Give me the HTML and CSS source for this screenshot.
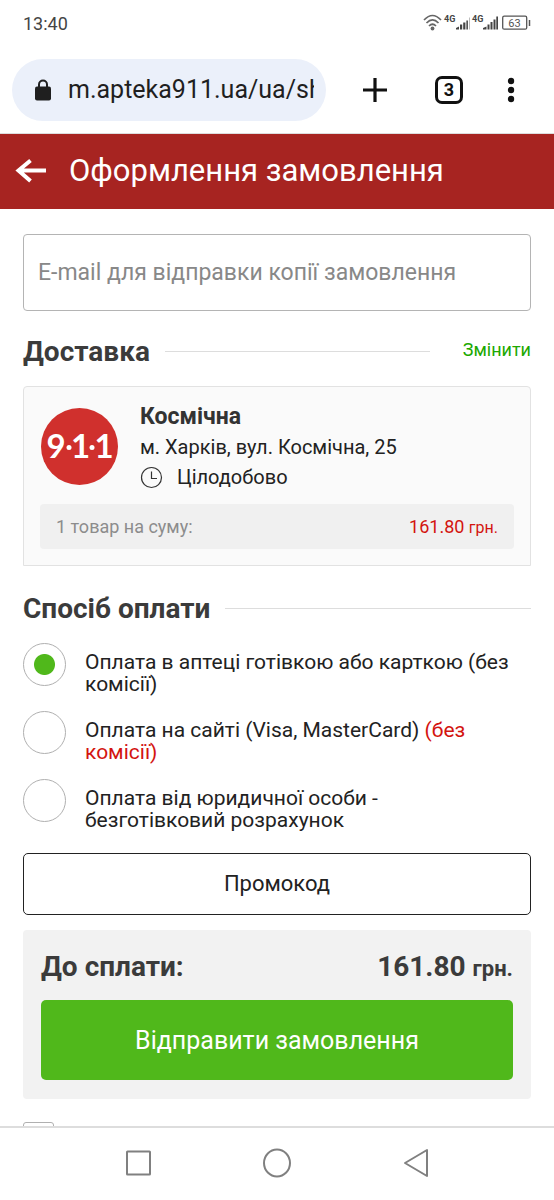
FILE: index.html
```html
<!DOCTYPE html>
<html lang="uk">
<head>
<meta charset="utf-8">
<meta name="viewport" content="width=device-width, initial-scale=1">
<title>Оформлення замовлення</title>
<link rel="stylesheet" href="styles.css">
</head>
<body>
<div class="screen">
  <div class="status">
    <time class="clock">13:40</time>
    <svg class="status-icons" width="108" height="20" viewBox="0 0 108 20" role="img" aria-label="Wi-Fi, 4G, 63%">
      <g fill="none" stroke="#666" stroke-width="1.700">
        <path d="M1 7Q9.500-2 18 7"/>
        <path d="M3.500 10Q9.500 4 15.500 10"/>
        <path d="M6 13Q9.500 9.500 13 13"/>
      </g>
      <circle cx="9.500" cy="15.500" r="1.900" fill="#666"/>
      <g class="net" fill="#444"><text x="21" y="9">4G</text><text x="49" y="9">4G</text></g>
      <g fill="#444">
        <path d="M33 16.500v-1.500l3-1.500v3zM37 16.500v-5h2.200v5zM40.200 16.500v-7h2.200v7z"/>
        <path d="M43.400 16.500v-9h1.500v9z"/><path d="M46 16.500v-12h1v12z" fill="#bbb"/>
        <path d="M60 16.500v-1.500l3.500-1.500v3zM64.500 16.500v-5h2v5zM67.500 16.500v-7.500h2v7.500zM70.500 16.500v-10h2v10zM73.300 16.500v-13h1.700v13z"/>
      </g>
      <rect x="79.700" y="3.200" width="24" height="13" rx="1.500" fill="none" stroke="#555" stroke-width="1.300"/>
      <path d="M106.500 7v6" stroke="#555" stroke-width="1.500"/>
      <text class="charge" x="91.500" y="13.500" text-anchor="middle" fill="#555">63</text>
    </svg>
  </div>

  <div class="browser">
    <label class="address">
      <svg width="18" height="22" viewBox="0 0 18 22" aria-hidden="true"><rect x="1" y="7.500" width="16" height="14" rx="2" fill="#1f1f1f"/><path d="M5 9V5.500a4 4 0 0 1 8 0V9" fill="none" stroke="#1f1f1f" stroke-width="2"/></svg>
      <input class="url" type="text" value="m.apteka911.ua/ua/shop" aria-label="Адреса сторінки">
    </label>
    <button class="tool" type="button" aria-label="Нова вкладка"><svg width="26" height="26" viewBox="0 0 26 26"><path d="M13 1v24M1 13h24" stroke="#111" stroke-width="3.200"/></svg></button>
    <button class="tool tabs" type="button" aria-label="Вкладки: 3"><span class="tab-count">3</span></button>
    <button class="tool more" type="button" aria-label="Меню"><svg width="8" height="26" viewBox="0 0 8 26"><g fill="#111"><circle cx="4" cy="4" r="3.200"/><circle cx="4" cy="13" r="3.200"/><circle cx="4" cy="22" r="3.200"/></g></svg></button>
  </div>

  <header class="header">
    <button class="back" type="button" aria-label="Назад"><svg width="32" height="26" viewBox="0 0 32 26"><path d="M15.500 2.500L3.500 12.500l12 10.500M3.500 12.500h27.500" fill="none" stroke="#fff" stroke-width="4"/></svg></button>
    <h1 class="title">Оформлення замовлення</h1>
  </header>

  <main class="content">
    <input class="email" type="email" placeholder="E-mail для відправки копії замовлення" aria-label="E-mail для відправки копії замовлення">

    <div class="section-head delivery-head">
      <h2 class="section-title">Доставка</h2>
      <span class="rule"></span>
      <a class="change" href="#">Змінити</a>
    </div>

    <section class="card">
      <div class="store">
        <svg class="logo" width="77" height="77" viewBox="0 0 77 77" role="img" aria-label="9·1·1">
          <circle cx="38.500" cy="38.500" r="38.500" fill="#d0302d"/>
          <g class="logo-digits" fill="#fff" text-anchor="middle"><text x="15" y="50">9</text><text x="39.500" y="50">1</text><text x="63" y="50">1</text></g>
          <g fill="#fff"><circle cx="28" cy="39.500" r="2.500"/><circle cx="51" cy="39.500" r="2.500"/></g>
        </svg>
        <div class="store-info">
          <h3 class="store-name">Космічна</h3>
          <p class="store-line">м. Харків, вул. Космічна, 25</p>
          <p class="store-line hours">
            <svg width="23" height="23" viewBox="0 0 23 23" aria-hidden="true"><circle cx="11.500" cy="11.500" r="10" fill="none" stroke="#333" stroke-width="1.200"/><path d="M11.500 5.500v7H17" fill="none" stroke="#333" stroke-width="1.200"/></svg>
            Цілодобово
          </p>
        </div>
      </div>
      <div class="summary"><span>1 товар на суму:</span><span class="price">161.80 <small>грн.</small></span></div>
    </section>

    <div class="section-head payment-head">
      <h2 class="section-title">Спосіб оплати</h2>
      <span class="rule"></span>
    </div>

    <div class="options" role="radiogroup" aria-label="Спосіб оплати">
      <label class="option"><input class="radio" type="radio" name="pay" checked><span class="option-text">Оплата в аптеці готівкою або карткою (без комісії)</span></label>
      <label class="option"><input class="radio" type="radio" name="pay"><span class="option-text">Оплата на сайті (Visa, MasterCard) <span class="accent">(без комісії)</span></span></label>
      <label class="option"><input class="radio" type="radio" name="pay"><span class="option-text">Оплата від юридичної особи - безготівковий розрахунок</span></label>
    </div>

    <button class="promo" type="button">Промокод</button>

    <section class="checkout">
      <div class="total"><span>До сплати:</span><span class="sum">161.80 <small>грн.</small></span></div>
      <button class="submit" type="button">Відправити замовлення</button>
    </section>

    <input class="check" type="checkbox" aria-label="Погодження з умовами">
  </main>

  <nav class="system-nav">
    <button class="nav-btn" type="button" aria-label="Останні програми"><svg width="32" height="32" viewBox="0 0 32 32"><rect x="5" y="4.500" width="23" height="23" rx=".5"/></svg></button>
    <button class="nav-btn" type="button" aria-label="Головний екран"><svg width="32" height="32" viewBox="0 0 32 32"><ellipse cx="16" cy="16" rx="13" ry="13.500"/></svg></button>
    <button class="nav-btn" type="button" aria-label="Назад"><svg width="32" height="32" viewBox="0 0 32 32"><path d="M27 3v26L5 16z" stroke-linejoin="round"/></svg></button>
  </nav>
</div>
</body>
</html>
```
FILE: styles.css
```css
* { box-sizing: border-box; }
body, h1, h2, h3, p { margin: 0; }
body { background: #fff; color: #222; font-family: Roboto, "Liberation Sans", sans-serif; }
button, input { font-family: inherit; }
button { margin: 0; padding: 0; border: 0; background: none; cursor: pointer; }
svg { display: block; flex: none; }

.screen { display: flex; flex-direction: column; height: 100vh; }

.status { display: flex; align-items: center; justify-content: space-between; height: 46px; padding: 0 23px; flex: none; }
.clock { font-size: 18px; color: #444; }
.net { font-size: 9px; font-weight: 700; }
.charge { font-size: 11px; }

.browser { display: flex; align-items: center; flex: none; height: 88px; padding: 0 18px 0 12px; border-bottom: 1px solid #ddd; }
.address { display: flex; align-items: center; gap: 16px; flex: 1; min-width: 0; height: 62px; padding: 0 12px 0 22px; border-radius: 31px; background: #ebf0fa; }
.url { flex: 1; min-width: 0; padding: 0; border: 0; outline: 0; background: none; font-size: 25px; color: #1f1f1f; }
.tool { display: flex; justify-content: center; align-items: center; width: 74px; height: 62px; }
.tool:first-of-type { margin-left: 12px; }
.more { width: 50px; }
.tab-count { display: flex; align-items: center; justify-content: center; width: 28px; height: 28px; border: 3px solid #111; border-radius: 7px; font-size: 18px; font-weight: 700; color: #111; }

.header { display: flex; align-items: center; gap: 22px; flex: none; height: 75px; padding: 0 15px 2px; background: #a72421; color: #fff; }
.title { font-size: 31px; line-height: 36px; font-weight: 400; white-space: nowrap; }

.content { flex: 1; min-height: 0; overflow: hidden; padding: 25px 23px 0; }
.email { display: block; width: 100%; height: 77px; padding: 0 14px; border: 1px solid #b4b4b4; border-radius: 4px; background: #fff; font-size: 23px; color: #222; }
.email::placeholder { color: #888; opacity: 1; }

.section-head { display: flex; align-items: center; gap: 15px; height: 36px; }
.section-title { font-size: 28px; font-weight: 700; color: #3b3b3b; }
.rule { flex: 1; height: 1px; background: #ddd; }
.change { margin-left: 18px; padding-bottom: 4px; font-size: 18px; color: #20a800; text-decoration: none; }
.delivery-head { margin: 22px 0 17px; }
.payment-head { margin: 24px 0 17px; }

.card { padding: 15px 16px 16px; border: 1px solid #e2e2e2; border-radius: 4px 4px 0 0; background: #fafafa; }
.store { display: flex; gap: 22px; margin-bottom: 12px; }
.logo { margin: 6px 0 0 1px; }
.logo-digits { font-family: Lato, sans-serif; font-size: 33px; font-weight: 700; }
.store-name { font-size: 23px; line-height: 30px; font-weight: 700; color: #333; }
.store-line { font-size: 20px; line-height: 30px; }
.hours { display: flex; align-items: center; gap: 14px; }
.summary { display: flex; align-items: center; justify-content: space-between; height: 45px; padding: 0 16px; border-radius: 4px; background: #f0f0f0; font-size: 18px; color: #8c8c8c; }
.price { color: #d3140f; }
.price small { font-size: 16px; }

.options { display: grid; gap: 25px; }
.option { display: flex; gap: 19px; height: 43px; }
.radio { appearance: none; flex: none; width: 43px; height: 43px; margin: 0; border: 1px solid #b0b0b0; border-radius: 50%; background: #fff; }
.radio:checked { background: radial-gradient(circle, #50b81b 10px, #fff 11px); }
.option-text { padding: 8px 12px 0 0; font-size: 21px; line-height: 22px; }
.accent { color: #d3140f; }

.promo { display: block; width: 100%; height: 62px; margin-top: 31px; padding-bottom: 2px; border: 1px solid #222; border-radius: 5px; font-size: 22px; color: #222; }

.checkout { margin-top: 15px; padding: 18px 18px 19px; border-radius: 4px; background: #f2f2f2; }
.total { display: flex; align-items: center; justify-content: space-between; height: 36px; font-size: 28px; font-weight: 700; color: #3b3b3b; }
.total small { font-size: 22px; }
.submit { display: block; width: 100%; height: 80px; margin-top: 16px; border-radius: 5px; background: #50b81b; font-size: 25px; color: #fff; }
.check { appearance: none; display: block; width: 31px; height: 31px; margin: 23px 0 0; border: 1px solid #b0b0b0; border-radius: 3px; }

.system-nav { display: flex; justify-content: center; align-items: center; gap: 107px; flex: none; height: 74px; padding-bottom: 2px; border-top: 2px solid #ddd; background: #fff; }
.nav-btn svg { fill: none; stroke: #808080; stroke-width: 2px; }
```
